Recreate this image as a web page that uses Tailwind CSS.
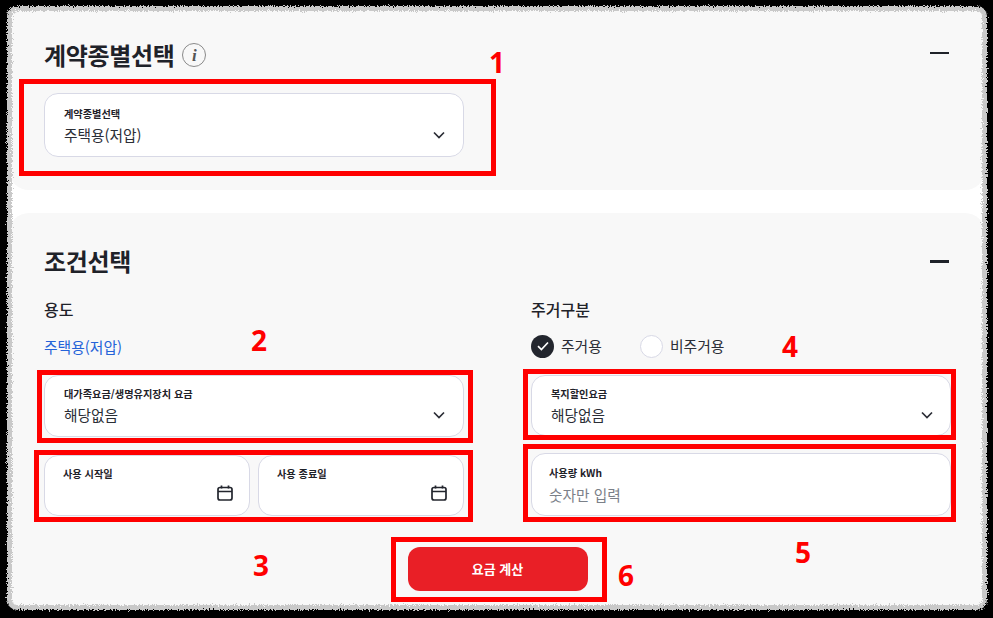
<!DOCTYPE html>
<html lang="ko">
<head>
    <meta charset="UTF-8">
    <title>요금 계산</title>
    <script src="https://cdn.jsdelivr.net/npm/@tailwindcss/browser@4"></script>
</head>
<body class="bg-black">
    <div class="relative w-[993px] h-[618px] overflow-hidden bg-black font-['Noto_Sans_CJK_KR','Noto_Sans',sans-serif] text-[#1f2229] pt-[8px] pl-[9px]">
        <!-- torn screenshot edge -->
        <svg class="absolute w-0 h-0">
            <filter id="torn" x="-2%" y="-2%" width="104%" height="104%">
                <feTurbulence type="fractalNoise" baseFrequency="0.8" numOctaves="2" seed="4" result="n"/>
                <feDisplacementMap in="SourceGraphic" in2="n" scale="6"/>
            </filter>
        </svg>

        <div class="relative w-[976px] h-[600px] rounded-[8px] bg-white overflow-hidden">
            <!-- 계약종별선택 -->
            <section class="h-[182px] bg-[#f8f8f8] rounded-b-[20px] pl-[35px] pr-[34px] pt-[30px]">
                <div class="flex items-center justify-between h-[34px]">
                    <div class="flex items-center gap-[8px]">
                        <h2 class="text-[24px] font-bold leading-[34px] tracking-[-0.35px]">계약종별선택</h2>
                        <span class="w-[24px] h-[24px] rounded-full border border-[#8a8a8a] flex items-center justify-center font-['Liberation_Serif',serif] italic font-bold text-[17px] leading-none text-[#555]">i</span>
                    </div>
                    <span class="w-[19px] h-[2px] bg-[#1f2229] mr-[2px] mb-[5px]"></span>
                </div>
                <div class="mt-[21px] w-[420px] h-[64px] bg-white border border-[#d8d9e6] rounded-[14px] pl-[19px] pr-[18px] pt-[12px]">
                    <p class="text-[10.2px] font-bold leading-[16px]">계약종별선택</p>
                    <div class="flex items-center justify-between h-[24px] mt-[1px]">
                        <span class="text-[14.7px] leading-[24px] text-[#2b2e36]">주택용(저압)</span>
                        <svg class="w-[12px] h-[8px]" viewBox="0 0 12 8" fill="none" stroke="#2b2e36" stroke-width="1.7"><path d="M1 1.5 6 6.5 11 1.5"/></svg>
                    </div>
                </div>
            </section>

            <!-- 조건선택 -->
            <section class="mt-[23px] h-[395px] bg-[#f8f8f8] rounded-t-[20px] pl-[35px] pr-[34px] pt-[31px]">
                <div class="flex items-center justify-between h-[34px]">
                    <h2 class="text-[24px] font-bold leading-[34px] tracking-[-0.35px]">조건선택</h2>
                    <span class="w-[19px] h-[3px] bg-[#1f2229] mr-[2px]"></span>
                </div>
                <div class="mt-[20px] grid grid-cols-[420px_420px] gap-x-[67px]">
                    <div>
                        <p class="text-[16px] leading-[22px] font-medium">용도</p>
                        <p class="mt-[15px] text-[14.8px] leading-[24px] text-[#2563d8]">주택용(저압)</p>
                        <div class="mt-[16px] h-[62px] bg-white border border-[#d8d9e6] rounded-[14px] pl-[19px] pr-[18px] pt-[10px]">
                            <p class="text-[10.2px] font-bold leading-[16px]">대가족요금/생명유지장치 요금</p>
                            <div class="flex items-center justify-between h-[24px] mt-[1px]">
                                <span class="text-[14.7px] leading-[24px] text-[#2b2e36]">해당없음</span>
                                <svg class="w-[12px] h-[8px]" viewBox="0 0 12 8" fill="none" stroke="#2b2e36" stroke-width="1.7"><path d="M1 1.5 6 6.5 11 1.5"/></svg>
                            </div>
                        </div>
                        <div class="mt-[18px] grid grid-cols-2 gap-[8px]">
                            <div class="h-[61px] bg-white border border-[#d8d9e6] rounded-[14px] pl-[18px] pr-[16px] pt-[10px]">
                                <p class="text-[10.2px] font-bold leading-[16px]">사용 시작일</p>
                                <div class="flex justify-end mt-[3px]">
                                    <svg class="w-[16px] h-[16px]" viewBox="0 0 16 16" fill="none" stroke="#23262e" stroke-width="1.7"><rect x="1" y="2.5" width="14" height="12.5" rx="2"/><path d="M1 6.5H15M4.5 .5V3.5M11.5 .5V3.5"/></svg>
                                </div>
                            </div>
                            <div class="h-[61px] bg-white border border-[#d8d9e6] rounded-[14px] pl-[18px] pr-[16px] pt-[10px]">
                                <p class="text-[10.2px] font-bold leading-[16px]">사용 종료일</p>
                                <div class="flex justify-end mt-[3px]">
                                    <svg class="w-[16px] h-[16px]" viewBox="0 0 16 16" fill="none" stroke="#23262e" stroke-width="1.7"><rect x="1" y="2.5" width="14" height="12.5" rx="2"/><path d="M1 6.5H15M4.5 .5V3.5M11.5 .5V3.5"/></svg>
                                </div>
                            </div>
                        </div>
                    </div>
                    <div>
                        <p class="text-[16px] leading-[22px] font-medium">주거구분</p>
                        <div class="mt-[15px] flex items-center h-[24px] text-[14.8px] text-[#2b2e36] -translate-y-[1px]">
                            <span class="w-[23px] h-[23px] rounded-full bg-[#23262e] flex items-center justify-center">
                                <svg class="w-[12px] h-[10px]" viewBox="0 0 12 10" fill="none" stroke="#fff" stroke-width="1.7"><path d="M1 5.2 4.4 8.5 11 1.5"/></svg>
                            </span>
                            <span class="ml-[7px] w-[79px]">주거용</span>
                            <span class="w-[23px] h-[23px] rounded-full bg-white border border-[#d8d9e6]"></span>
                            <span class="ml-[7px]">비주거용</span>
                        </div>
                        <div class="mt-[16px] h-[61px] bg-white border border-[#d8d9e6] rounded-[14px] pl-[19px] pr-[18px] pt-[10px]">
                            <p class="text-[10.2px] font-bold leading-[16px]">복지할인요금</p>
                            <div class="flex items-center justify-between h-[24px] mt-[1px]">
                                <span class="text-[14.7px] leading-[24px] text-[#2b2e36]">해당없음</span>
                                <svg class="w-[12px] h-[8px] translate-x-[1px]" viewBox="0 0 12 8" fill="none" stroke="#2b2e36" stroke-width="1.7"><path d="M1 1.5 6 6.5 11 1.5"/></svg>
                            </div>
                        </div>
                        <div class="mt-[17px] h-[63px] bg-white border border-[#d8d9e6] rounded-[14px] pl-[17px] pt-[11px]">
                            <p class="text-[10.2px] font-bold leading-[16px]">사용량 kWh</p>
                            <p class="text-[14.7px] leading-[24px] mt-[2px] text-[#7b8088]">숫자만 입력</p>
                        </div>
                    </div>
                </div>
                <div class="mt-[31px] flex justify-center">
                    <button class="w-[180px] h-[44px] rounded-[12px] bg-[#e91f26] text-white text-[13px] font-bold">요금 계산</button>
                </div>
            </section>
        </div>

        <!-- noisy fringe lying over the capture edge -->
        <div class="absolute left-[7px] top-[6px] w-[980px] h-[604px] rounded-[10px] border-[5px] border-[#c9c9c9] [filter:url(#torn)]"></div>

        <!-- red annotations drawn on top of the capture -->
        <div class="absolute left-[19px] top-[79px] w-[477px] h-[97px] border-[5px] border-[#ff0000]"></div>
        <div class="absolute left-[37px] top-[370px] w-[436px] h-[73px] border-[5px] border-[#ff0000]"></div>
        <div class="absolute left-[34px] top-[450px] w-[439px] h-[72px] border-[5px] border-[#ff0000]"></div>
        <div class="absolute left-[523px] top-[369px] w-[433px] h-[71px] border-[5px] border-[#ff0000]"></div>
        <div class="absolute left-[523px] top-[444px] w-[433px] h-[78px] border-[5px] border-[#ff0000]"></div>
        <div class="absolute left-[391px] top-[537px] w-[216px] h-[65px] border-[5px] border-[#ff0000]"></div>
        <span class="absolute left-[489px] top-[43px] text-[28px] leading-[38px] font-bold text-[#ff0000] font-['Noto_Sans',sans-serif]">1</span>
        <span class="absolute left-[251px] top-[321px] text-[28px] leading-[38px] font-bold text-[#ff0000] font-['Noto_Sans',sans-serif]">2</span>
        <span class="absolute left-[253px] top-[546px] text-[28px] leading-[38px] font-bold text-[#ff0000] font-['Noto_Sans',sans-serif]">3</span>
        <span class="absolute left-[782px] top-[327px] text-[28px] leading-[38px] font-bold text-[#ff0000] font-['Noto_Sans',sans-serif]">4</span>
        <span class="absolute left-[795px] top-[533px] text-[28px] leading-[38px] font-bold text-[#ff0000] font-['Noto_Sans',sans-serif]">5</span>
        <span class="absolute left-[618px] top-[556px] text-[28px] leading-[38px] font-bold text-[#ff0000] font-['Noto_Sans',sans-serif]">6</span>
    </div>
</body>
</html>
